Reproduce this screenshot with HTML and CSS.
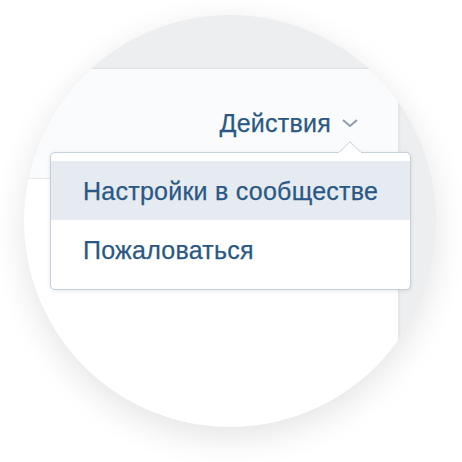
FILE: index.html
```html
<!DOCTYPE html>
<html>
  <head>
    <title>Действия</title>
    <meta charset="UTF-8" />
    <link rel="stylesheet" href="styles.css">
  </head>
  <body>
    <div class="lens">
      <div class="page">
        <div class="head">
          <a class="actions" href="#">Действия
            <svg class="chev" width="16" height="8" viewBox="0 0 16 8"><path d="M1 1l7 6 7-6" fill="none" stroke="#939cab" stroke-width="2"/></svg>
          </a>
        </div>
        <div class="body"></div>
      </div>
    </div>

    <div class="menu">
      <svg class="tip" width="22" height="12" viewBox="0 0 22 12"><path d="M0 11.5L11 0.8 22 11.5" fill="#fff" stroke="#c5d0db" stroke-width="1"/><rect x="0" y="11" width="22" height="2" fill="#fff"/></svg>
      <a class="item active" href="#">Настройки в сообществе</a>
      <a class="item" href="#">Пожаловаться</a>
    </div>
  </body>
</html>
```

FILE: styles.css
```css
body {
  margin: 0;
  width: 462px;
  height: 462px;
  background: #fff;
  font-family: "Liberation Sans", Arial, sans-serif;
  overflow: hidden;
}
a {
  color: #2a5885;
  text-decoration: none;
  -webkit-text-stroke: 0.25px #2a5885;
  letter-spacing: 0.25px;
}
.lens {
  width: 412px;
  height: 412px;
  margin: 15px 0 0 24px;
  border-radius: 50%;
  overflow: hidden;
  background: #edeef0;
  box-shadow: 0 10px 34px rgba(0, 0, 0, 0.11);
}
.page {
  margin: 53px 0 0 -20px;
  width: 394px;
  border-top: 1px solid #dfe2e8;
  border-right: 1px solid #e3e5e9;
  box-shadow: 1px 0 2px rgba(0, 0, 0, 0.04);
}
.head {
  height: 109px;
  background: #fafbfc;
  border-bottom: 1px solid #e7e8ec;
  display: flex;
  justify-content: flex-end;
  padding-right: 40px;
}
.actions {
  margin-top: 39px;
  font-size: 25px;
  line-height: 30px;
  height: 30px;
  display: flex;
  align-items: center;
}
.chev {
  margin-left: 11px;
}
.body {
  height: 300px;
  background: #fff;
}
.menu {
  position: absolute;
  left: 50px;
  top: 152px;
  width: 359px;
  padding: 8px 0 10px;
  background: #fff;
  border: 1px solid #c5d0db;
  border-radius: 5px;
  box-shadow: 0 1px 4px rgba(0, 0, 0, 0.1);
}
.tip {
  position: absolute;
  left: 288px;
  top: -12px;
}
.item {
  display: block;
  height: 59px;
  line-height: 61px;
  padding-left: 32px;
  font-size: 25px;
}
.active {
  background: #e5ebf1;
}
```
